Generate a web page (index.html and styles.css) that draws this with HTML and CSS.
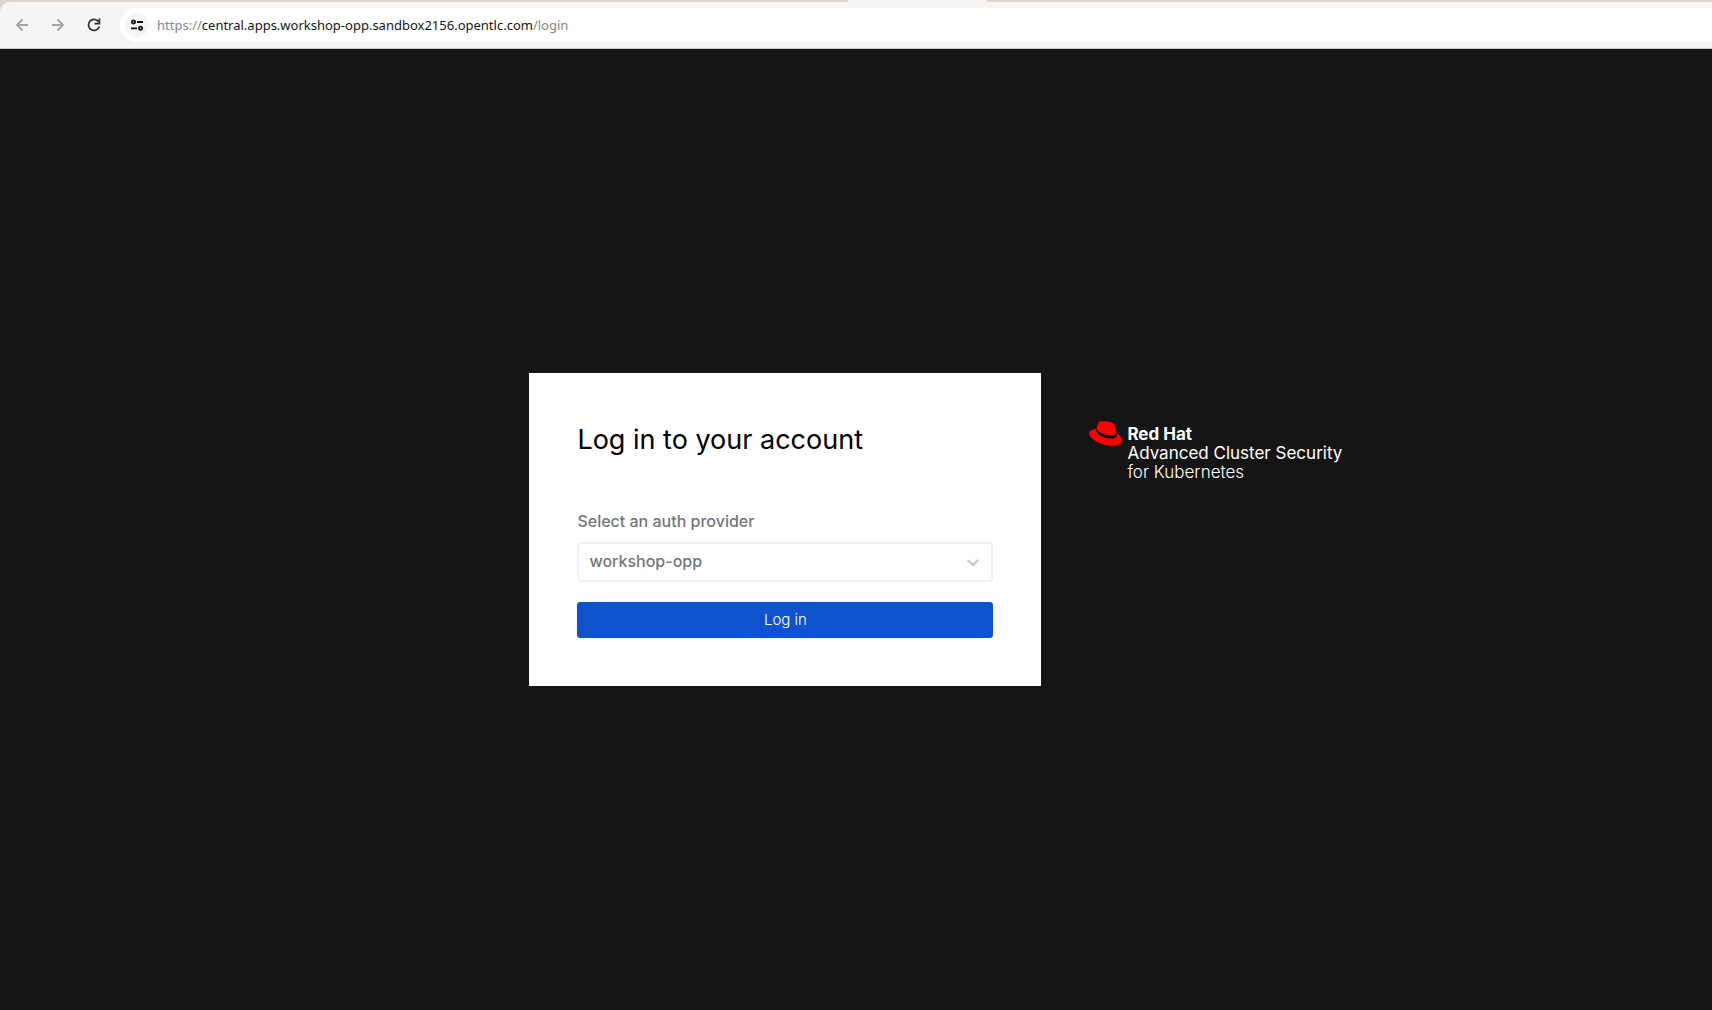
FILE: index.html
```html
<!DOCTYPE html>
<html lang="en">
<head>
<meta charset="utf-8">
<title>Log in</title>
<link rel="stylesheet" href="styles.css">
</head>
<body>
<header class="browser">
  <div class="toolbar">
    <button class="nav-button nav-muted" type="button" aria-label="Back"><svg width="16" height="16" viewBox="0 0 16 16" fill="none" stroke="currentColor" stroke-width="1.9"><path d="M14 8H3M8.500 2.500 3 8l5.500 5.500"/></svg></button>
    <button class="nav-button nav-muted" type="button" aria-label="Forward"><svg width="16" height="16" viewBox="0 0 16 16" fill="none" stroke="currentColor" stroke-width="1.9"><path d="M2 8h11M7.500 2.500 13 8l-5.500 5.500"/></svg></button>
    <button class="nav-button" type="button" aria-label="Reload"><svg width="16" height="16" viewBox="0 0 16 16" fill="none" stroke="currentColor" stroke-width="1.8"><path d="M13.300 9.400A5.500 5.500 0 1 1 12.400 4.600"/><path d="M13.400 1.500v5.200H8.500"/></svg></button>
    <div class="address">
      <button class="site-info" type="button" aria-label="View site information"><svg width="14" height="14" viewBox="0 0 14 14" fill="none" stroke="currentColor" stroke-width="1.800"><circle cx="3.500" cy="4" r="1.600"/><path d="M7 4h6M1 10.300h6"/><circle cx="10.500" cy="10.300" r="1.600"/></svg></button>
      <a class="url" href="#login">https://<span class="url-host">central.apps.workshop-opp.sandbox2156.opentlc.com</span>/login</a>
    </div>
  </div>
  <div class="tab-gap"></div>
</header>
<main class="login" id="login">
  <form class="card">
    <h1 class="title">Log in to your account</h1>
    <label class="label" for="provider">Select an auth provider</label>
    <div class="select-wrap">
      <select class="select" id="provider"><option>workshop-opp</option></select>
      <svg class="chevron" width="12" height="8" viewBox="0 0 12 8" fill="none" stroke="currentColor" stroke-width="2.400" stroke-linecap="round" stroke-linejoin="round"><path d="m1.300 1.500 4.700 4.700 4.700-4.700"/></svg>
    </div>
    <button class="submit" type="button">Log in</button>
  </form>
  <div class="brand">
    <svg class="hat" width="33" height="25" viewBox="0 0 33 25"><path fill="#f00" d="M7.500 8 C8.200 5 9 2 10 .9 C11.200-.1 13.300.2 15 .8 C16.500-.1 18 .1 19.500.8 C22 1 24.300 1.700 25 3.200 C26.200 5.800 27 9.500 27.500 12.200 C31 14 33.500 17 32.700 20.300 C31.700 24 26.500 25.500 20 24.600 C11 23.600 1.500 18.500.2 13 C-.4 10 2.500 8.300 7.500 8Z"/><path fill="#000" d="M7.500 8 7.100 10 C7.700 13.500 15 17.600 22.500 17.600 C26.500 17.500 28.200 15.800 27.800 13.800 L27.400 12 C26.500 14 24.300 14.500 21 14.300 C15.200 14 9 11.300 7.500 8Z"/></svg>
    <p class="brand-text"><strong class="brand-name">Red Hat</strong><span class="brand-product">Advanced Cluster Security</span><span class="brand-platform">for Kubernetes</span></p>
  </div>
</main>
</body>
</html>
```
FILE: styles.css
```css
* {
  box-sizing: border-box;
}

body {
  display: flex;
  flex-direction: column;
  min-height: 100vh;
  margin: 0;
  background: #151515;
  font-family: Inter, "Liberation Sans", sans-serif;
}

button {
  border: 0;
  padding: 0;
}

svg {
  display: block;
}

.browser {
  position: relative;
  padding-top: 2px;
  background: #ddd6d0;
  border-bottom: 1px solid #cbc4bf;
}

.toolbar {
  display: flex;
  align-items: center;
  padding: 6px 0 6px 4px;
  background: #f6f5f3;
  border-top-left-radius: 10px;
}

.tab-gap {
  position: absolute;
  top: 0;
  left: 848px;
  width: 139px;
  height: 2px;
  background: #f6f5f3;
}

.nav-button {
  display: grid;
  place-items: center;
  width: 36px;
  height: 34px;
  background: transparent;
  color: #2e3436;
}

.nav-muted {
  color: #a3a5a5;
}

.address {
  display: flex;
  flex: 1;
  align-items: center;
  gap: 8px;
  height: 34px;
  margin-left: 8px;
  padding-left: 5px;
  background: #fff;
  border-radius: 17px 0 0 17px;
}

.site-info {
  display: grid;
  place-items: center;
  width: 24px;
  height: 24px;
  background: #f6f5f3;
  border-radius: 12px;
  color: #111;
}

.url {
  color: #858585;
  font: 13px/20px "Noto Sans", sans-serif;
  text-decoration: none;
}

.url-host {
  color: #151515;
}

.login {
  display: grid;
  flex: 1;
  grid-template-columns: 15fr 512px 19fr;
  align-content: center;
}

.card {
  display: flex;
  flex-direction: column;
  grid-column: 2;
  padding: 48px;
  background: #fff;
}

.title {
  margin: 0 0 50px;
  color: #000;
  font-size: 27px;
  font-weight: 400;
  line-height: 38px;
}

.label {
  margin-bottom: 9px;
  color: #737679;
  font-size: 16px;
  font-weight: 500;
  line-height: 24px;
}

.select-wrap {
  position: relative;
  margin-bottom: 20px;
}

.select {
  display: block;
  width: 100%;
  height: 40px;
  padding: 0 40px 2px 10px;
  appearance: none;
  background: #fff;
  border: 2px solid #f0f0f0;
  border-radius: 4px;
  color: #737679;
  font: inherit;
  font-size: 16px;
  font-weight: 500;
}

.chevron {
  position: absolute;
  top: 17px;
  right: 14px;
  color: #ccc;
  pointer-events: none;
}

.submit {
  height: 36px;
  padding-bottom: 2px;
  background: #0f52ce;
  border-radius: 3px;
  color: #fff;
  font: inherit;
  font-size: 15px;
  font-weight: 300;
}

.brand {
  display: flex;
  align-items: flex-start;
  gap: 5px;
  padding: 48px;
}

.hat {
  flex: none;
}

.brand-text {
  display: flex;
  flex-direction: column;
  margin: 4px 0 0;
  color: #fff;
  font-size: 17px;
  line-height: 19px;
  white-space: nowrap;
}

.brand-name {
  font-weight: 700;
}

.brand-product {
  font-weight: 400;
}

.brand-platform {
  font-weight: 300;
}
```
